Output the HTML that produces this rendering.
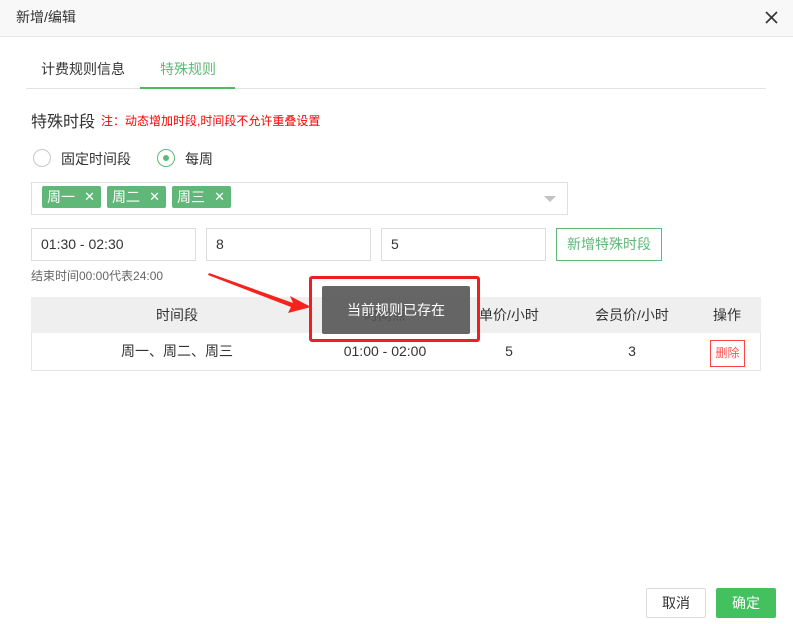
<!DOCTYPE html>
<html><head><meta charset="utf-8"><style>
*{margin:0;padding:0;box-sizing:border-box}
body{width:793px;height:624px;background:#fff;font-family:"Liberation Sans","Noto Sans CJK SC",sans-serif;color:#333;position:relative;overflow:hidden;font-size:14px}
.a{position:absolute}
.hdr{left:0;top:0;width:793px;height:37px;background:#f8f8f8;border-bottom:1px solid #e8e8e8}
.inp{height:33px;border:1px solid #ddd;top:228px;padding-left:9px;line-height:31px;font-size:14px;color:#333}
.tag{top:186px;height:22px;width:59px;background:#5fb878;color:#fff;border-radius:2px;font-size:14px;line-height:22px;padding-left:5px}
.tag b{position:absolute;right:6px;top:0;font-weight:normal;font-size:13px}
.th{top:297px;height:36px;line-height:36px;text-align:center;font-size:14px;color:#333}
.td{top:333px;height:37px;line-height:37px;text-align:center;font-size:14px;color:#333}
</style></head><body>
<div class="a hdr"></div>
<div class="a" style="left:16px;top:7px;font-size:14px;color:#333">新增/编辑</div>
<svg class="a" style="left:765px;top:11px" width="13" height="13"><path d="M1 1L12 12M12 1L1 12" stroke="#333" stroke-width="1.6"/></svg>

<div class="a" style="left:26px;top:88px;width:740px;height:1px;background:#e2e2e2"></div>
<div class="a" style="left:41px;top:59px;font-size:14px">计费规则信息</div>
<div class="a" style="left:160px;top:59px;font-size:14px;color:#5fb878">特殊规则</div>
<div class="a" style="left:140px;top:87px;width:95px;height:2px;background:#4cbb60"></div>

<div class="a" style="left:31px;top:108px;font-size:16px">特殊时段</div>
<div class="a" style="left:101px;top:112px;font-size:12px;color:#f00">注：动态增加时段,时间段不允许重叠设置</div>

<div class="a" style="left:33px;top:149px;width:18px;height:18px;border:1px solid #c8c8c8;border-radius:50%"></div>
<div class="a" style="left:61px;top:149px;font-size:14px">固定时间段</div>
<div class="a" style="left:157px;top:149px;width:18px;height:18px;border:1px solid #5fb878;border-radius:50%"></div>
<div class="a" style="left:163px;top:155px;width:6px;height:6px;background:#5fb878;border-radius:50%"></div>
<div class="a" style="left:185px;top:149px;font-size:14px">每周</div>

<div class="a" style="left:31px;top:182px;width:537px;height:33px;border:1px solid #e0e0e0"></div>
<div class="a tag" style="left:42px">周一<b>✕</b></div>
<div class="a tag" style="left:107px">周二<b>✕</b></div>
<div class="a tag" style="left:172px">周三<b>✕</b></div>
<svg class="a" style="left:544px;top:196px" width="12" height="7"><path d="M0 0L12 0L6 6Z" fill="#c2c2c2"/></svg>

<div class="a inp" style="left:31px;width:165px">01:30 - 02:30</div>
<div class="a inp" style="left:206px;width:165px">8</div>
<div class="a inp" style="left:381px;width:165px">5</div>
<div class="a" style="left:556px;top:228px;width:106px;height:33px;border:1px solid #5fb878;color:#5fb878;font-size:14px;line-height:31px;text-align:center">新增特殊时段</div>
<div class="a" style="left:31px;top:267px;font-size:12px;color:#666">结束时间00:00代表24:00</div>

<div class="a" style="left:31px;top:297px;width:730px;height:74px;border:1px solid #e6e6e6;border-top:none"></div>
<div class="a" style="left:31px;top:297px;width:730px;height:36px;background:#efefef"></div>
<div class="a th" style="left:97px;width:160px">时间段</div>
<div class="a th" style="left:305px;width:160px">时间点</div>
<div class="a th" style="left:459px;width:100px">单价/小时</div>
<div class="a th" style="left:582px;width:100px">会员价/小时</div>
<div class="a th" style="left:697px;width:60px">操作</div>
<div class="a td" style="left:97px;width:160px">周一、周二、周三</div>
<div class="a td" style="left:305px;width:160px">01:00 - 02:00</div>
<div class="a td" style="left:459px;width:100px">5</div>
<div class="a td" style="left:582px;width:100px">3</div>
<div class="a" style="left:710px;top:340px;width:35px;height:27px;border:1px solid #f44;color:#f55;font-size:12px;line-height:25px;text-align:center">删除</div>

<div class="a" style="left:322px;top:286px;width:148px;height:48px;background:rgba(85,85,85,.9);border-radius:2px;color:#fff;font-size:14px;line-height:48px;text-align:center">当前规则已存在</div>
<div class="a" style="left:309px;top:276px;width:171px;height:66px;border:3px solid #f01e1e;border-radius:3px"></div>
<svg class="a" style="left:200px;top:265px" width="115" height="50"><path d="M9 8L93 38L90 31L111 42L88 48L91 42L8 10Z" fill="#f5231b"/></svg>

<div class="a" style="left:646px;top:588px;width:60px;height:30px;border:1px solid #dcdcdc;border-radius:2px;text-align:center;line-height:28px;font-size:14px">取消</div>
<div class="a" style="left:716px;top:588px;width:60px;height:30px;background:#43c15f;border-radius:2px;color:#fff;text-align:center;line-height:30px;font-size:14px">确定</div>
</body></html>
